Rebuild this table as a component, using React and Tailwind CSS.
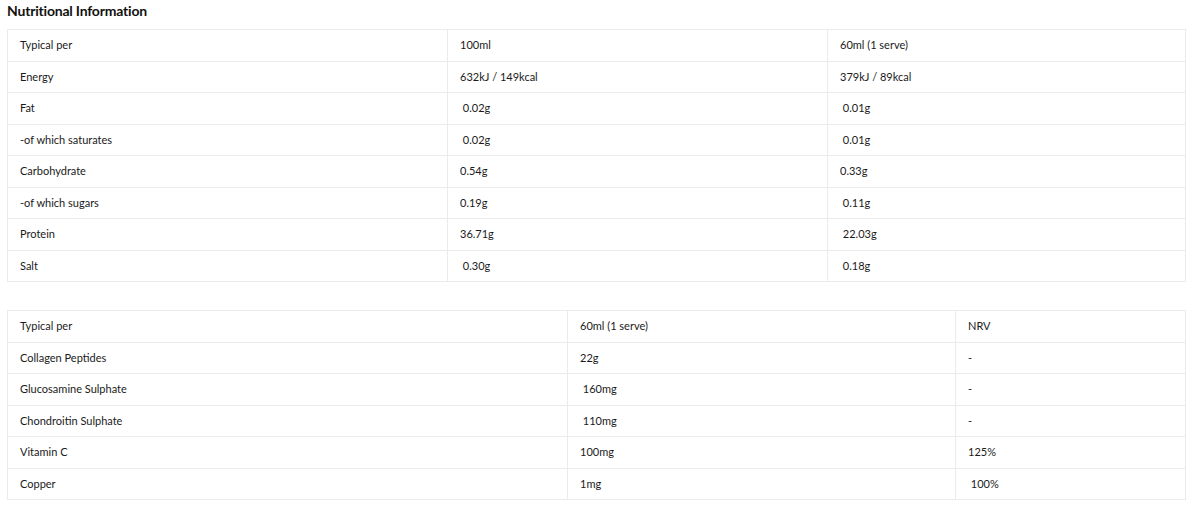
import React from 'react';

const main = [
  ['Typical per', '100ml', '60ml (1 serve)'],
  ['Energy', '632kJ / 149kcal', '379kJ / 89kcal'],
  ['Fat', ' 0.02g', ' 0.01g'],
  ['-of which saturates', ' 0.02g', ' 0.01g'],
  ['Carbohydrate', '0.54g', '0.33g'],
  ['-of which sugars', '0.19g', ' 0.11g'],
  ['Protein', '36.71g', ' 22.03g'],
  ['Salt', ' 0.30g', ' 0.18g'],
];

const extra = [
  ['Typical per', '60ml (1 serve)', 'NRV'],
  ['Collagen Peptides', '22g', '-'],
  ['Glucosamine Sulphate', ' 160mg', '-'],
  ['Chondroitin Sulphate', ' 110mg', '-'],
  ['Vitamin C', '100mg', '125%'],
  ['Copper', '1mg', ' 100%'],
];

function NutritionTable({ rows, widths }) {
  return (
    <table className="w-[1178px] border-collapse table-fixed">
      <colgroup>
        {widths.map((w, i) => (
          <col key={i} style={{ width: w }} />
        ))}
      </colgroup>
      <tbody>
        {rows.map((row, r) => (
          <tr key={r} className="h-[31.5px]">
            {row.map((cell, c) => (
              <td
                key={c}
                className="border border-[#ebebe7] pl-[12px] text-[11px] text-[#1a1a1a] whitespace-pre align-middle"
              >
                {cell}
              </td>
            ))}
          </tr>
        ))}
      </tbody>
    </table>
  );
}

export default function App() {
  return (
    <div className="bg-white w-[1200px] h-[515px] px-[7px] pt-[3px]" style={{ fontFamily: 'Lato, "Noto Sans", sans-serif' }}>
      <h2 className="text-[14px] font-bold text-[#111] leading-[16px] tracking-[-0.2px]">Nutritional Information</h2>
      <div className="mt-[10px]">
        <NutritionTable rows={main} widths={[440, 380, 358]} />
      </div>
      <div className="mt-[28px]">
        <NutritionTable rows={extra} widths={[560, 388, 230]} />
      </div>
    </div>
  );
}
